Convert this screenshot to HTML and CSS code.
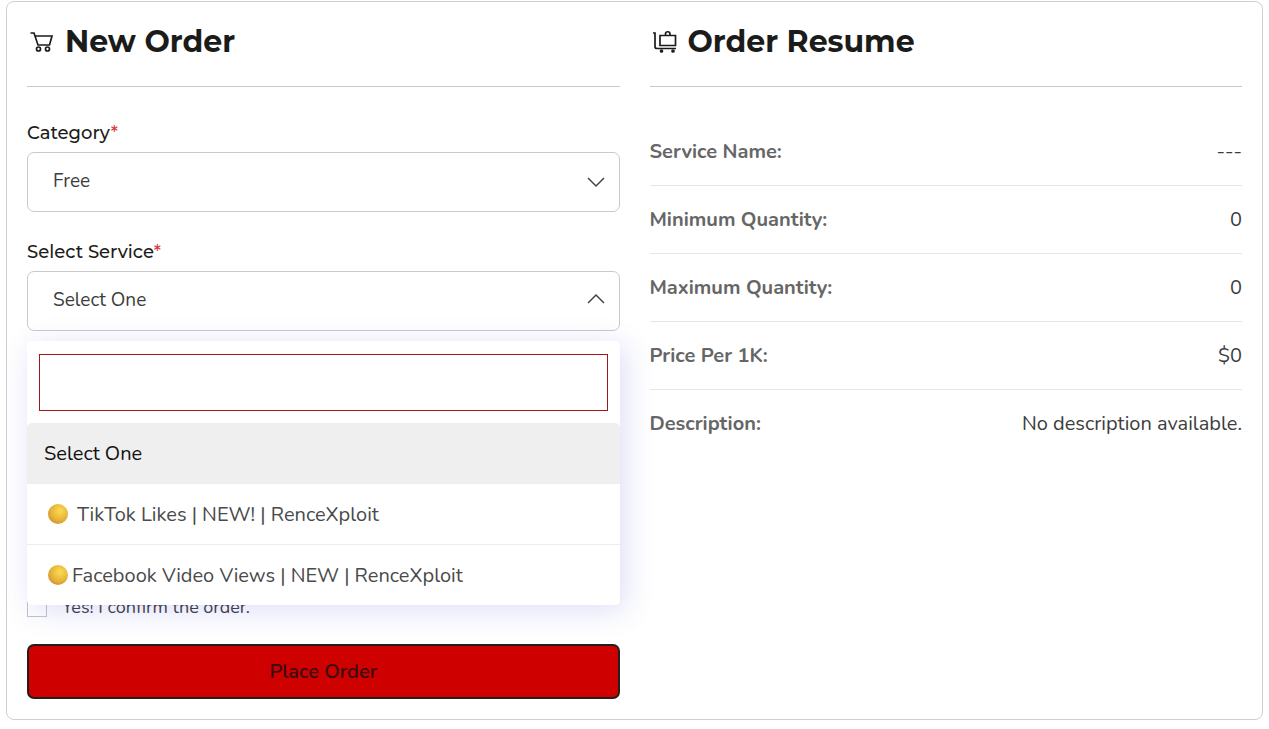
FILE: index.html
```html
<!DOCTYPE html>
<html lang="en">
<head>
    <meta charset="UTF-8">
    <meta name="viewport" content="width=device-width, initial-scale=1.0">
    <title>New Order</title>
    <link rel="stylesheet" href="styles.css">
</head>
<body>
    <main class="card">
        <form class="order">
            <h2 class="title">
                <svg class="icon" viewBox="0 0 24 24" aria-hidden="true">
                    <path d="M0.500 3H4l4 12h11.500L22 6H5"/>
                    <circle cx="8.500" cy="19" r="2"/>
                    <circle cx="17.500" cy="19" r="2"/>
                </svg>
                New Order
            </h2>

            <div class="field">
                <label for="category">Category<span class="required">*</span></label>
                <div class="select">
                    <select id="category">
                        <option>Free</option>
                    </select>
                    <svg class="arrow" viewBox="0 0 18 10" aria-hidden="true"><path d="M1 1l8 8 8-8"/></svg>
                </div>
            </div>

            <div class="field service">
                <label for="service">Select Service<span class="required">*</span></label>
                <div class="select">
                    <select id="service">
                        <option>Select One</option>
                    </select>
                    <svg class="arrow" viewBox="0 0 18 10" aria-hidden="true"><path d="M1 7l8-8 8 8"/></svg>
                </div>
                <div class="dropdown">
                    <div class="search">
                        <input type="text" aria-label="Search service">
                    </div>
                    <ul class="options" role="listbox" aria-label="Services">
                        <li class="selected" role="option" aria-selected="true">Select One</li>
                        <li role="option" aria-selected="false"><span class="coin spaced"></span>TikTok Likes | NEW! | RenceXploit</li>
                        <li role="option" aria-selected="false"><span class="coin"></span>Facebook Video Views | NEW | RenceXploit</li>
                    </ul>
                </div>
            </div>

            <div class="confirm">
                <input type="checkbox" id="confirm">
                <label for="confirm">Yes! I confirm the order.</label>
            </div>
            <button type="submit" class="submit">Place Order</button>
        </form>

        <section class="resume">
            <h2 class="title">
                <svg class="icon" viewBox="0 0 24 24" aria-hidden="true">
                    <path d="M0 3h2v13.500a2 2 0 0 0 2 2H23"/>
                    <path d="M7 5.500h15.500v10H7z"/>
                    <path d="M12.500 5v-1a2 2 0 0 1 4.500 0v1"/>
                    <circle cx="8.500" cy="21" r="1"/>
                    <circle cx="20" cy="21" r="1"/>
                </svg>
                Order Resume
            </h2>

            <dl class="details">
                <div><dt>Service Name:</dt><dd>---</dd></div>
                <div><dt>Minimum Quantity:</dt><dd>0</dd></div>
                <div><dt>Maximum Quantity:</dt><dd>0</dd></div>
                <div><dt>Price Per 1K:</dt><dd>$0</dd></div>
                <div><dt>Description:</dt><dd>No description available.</dd></div>
            </dl>
        </section>
    </main>
</body>
</html>
```

FILE: styles.css
```css
* {
    box-sizing: border-box;
}
body {
    margin: 1px 6px;
    background-color: #fff;
    color: #3d3d3d;
    font-family: Nunito, Lato, sans-serif;
    font-size: 20px;
    line-height: 28px;
}
.card {
    display: grid;
    grid-template-columns: 1fr 1fr;
    gap: 30px;
    padding: 20px;
    border: 1px solid #cfcfcf;
    border-radius: 8px;
}
.title {
    display: flex;
    align-items: center;
    gap: 11px;
    margin: 0 0 30px;
    padding: 0 3px 24px;
    border-bottom: 1px solid #c8cac9;
    color: #1b1c1a;
    font-family: Montserrat, Inter, sans-serif;
    font-size: 30px;
    font-weight: 700;
    line-height: 40px;
}
.icon {
    width: 24px;
    height: 24px;
    fill: none;
    stroke: #1b1c1a;
    stroke-width: 1.7;
}
.field {
    position: relative;
    margin-bottom: 24px;
}
.field label {
    display: block;
    margin-bottom: 4px;
    padding-top: 1px;
    color: #1b1c1a;
    font-family: Montserrat, Inter, sans-serif;
    font-size: 18px;
    font-weight: 500;
    line-height: 30px;
}
.required {
    color: #dc3545;
}
.select {
    display: grid;
    align-items: center;
}
.select select,
.select .arrow {
    grid-area: 1 / 1;
}
.select select {
    width: 100%;
    height: 60px;
    padding: 0 50px 2px 25px;
    border: 1px solid #c8cac9;
    border-radius: 7px;
    background-color: #fff;
    color: #3d3d3d;
    font-family: inherit;
    font-size: 19px;
    appearance: none;
}
.arrow {
    justify-self: end;
    width: 18px;
    height: 10px;
    margin-right: 15px;
    overflow: visible;
    fill: none;
    stroke: #444;
    stroke-width: 1.5;
    pointer-events: none;
}
/* leaves room for the open list */
.service {
    margin-bottom: 266px;
}
.dropdown {
    position: absolute;
    top: 100%;
    left: 0;
    right: 0;
    z-index: 1;
    margin-top: 10px;
    border-radius: 5px;
    background-color: #fff;
    box-shadow: 5px 5px 30px rgba(82, 85, 222, 0.2);
}
.search {
    padding: 13px 12px 12px;
}
.search input {
    display: block;
    width: 100%;
    height: 57px;
    padding: 0 16px;
    border: 1px solid #a01717;
    font: inherit;
}
.options {
    margin: 0;
    padding: 0;
    list-style: none;
}
.options li {
    display: flex;
    align-items: center;
    height: 61px;
    padding: 1px 17px 0;
    border-bottom: 1px solid #ececec;
    color: #4a4a4a;
}
.options li:last-child {
    height: 60px;
    border-bottom: none;
}
.options .selected {
    border-radius: 5px 5px 0 0;
    background-color: #efefef;
    color: #111;
}
.coin {
    width: 20px;
    height: 20px;
    margin: 0 4px 2px;
    border-radius: 50%;
    background: radial-gradient(circle at 60% 35%, #f8d54c 10%, #e3b037 55%, #b9782f);
}
.coin.spaced {
    margin-right: 9px;
}
.confirm {
    display: flex;
    align-items: center;
    gap: 15px;
    height: 20px;
    margin-bottom: 27px;
    font-size: 18px;
}
.confirm input {
    width: 20px;
    height: 20px;
    margin: 0;
    border: 1px solid #c4c4cc;
    background-color: #fff;
    appearance: none;
}
.submit {
    width: 100%;
    height: 55px;
    border: 2px solid #271c1c;
    border-radius: 7px;
    background-color: #cf0000;
    color: #3a0d0d;
    font-family: inherit;
    font-size: 20px;
    font-weight: 600;
    cursor: pointer;
}
.details {
    margin: 0;
    padding-top: 1px;
}
.details div {
    display: flex;
    align-items: center;
    justify-content: space-between;
    height: 68px;
    border-bottom: 1px solid #e6e6e6;
}
.details div:last-child {
    border-bottom: none;
}
.details dt {
    color: #666;
    font-weight: 700;
}
.details dd {
    margin: 0;
}
```
